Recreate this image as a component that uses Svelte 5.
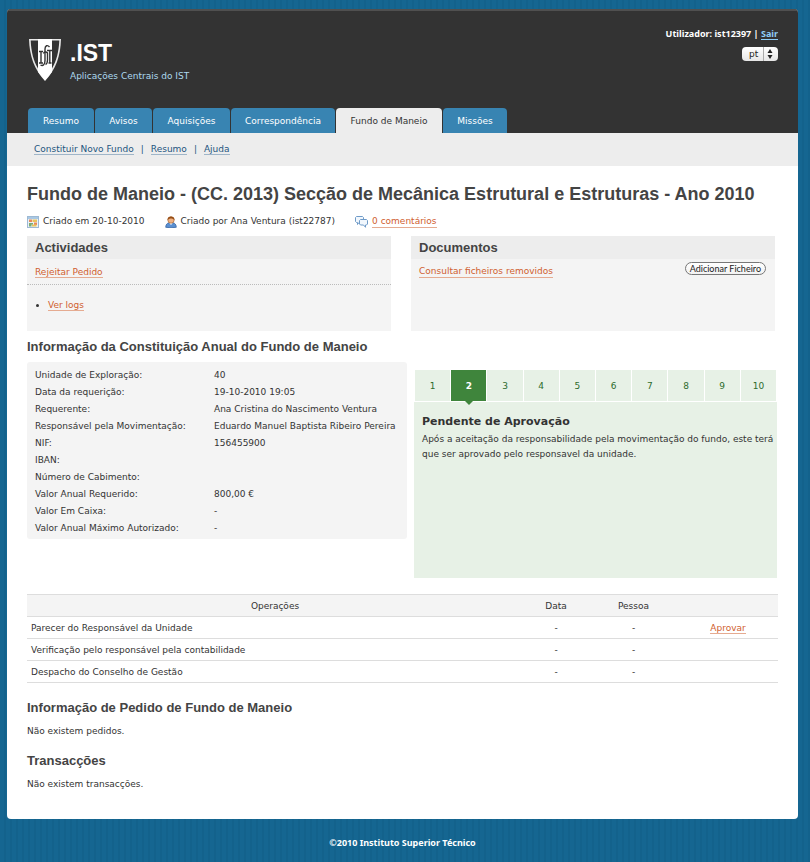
<script>
  const tabs = ['Resumo', 'Avisos', 'Aquisições', 'Correspondência', 'Fundo de Maneio', 'Missões'];
  const current = 'Fundo de Maneio';
  const details = [
    ['Unidade de Exploração:', '40'],
    ['Data da requerição:', '19-10-2010 19:05'],
    ['Requerente:', 'Ana Cristina do Nascimento Ventura'],
    ['Responsável pela Movimentação:', 'Eduardo Manuel Baptista Ribeiro Pereira'],
    ['NIF:', '156455900'],
    ['IBAN:', ''],
    ['Número de Cabimento:', ''],
    ['Valor Anual Requerido:', '800,00 €'],
    ['Valor Em Caixa:', '-'],
    ['Valor Anual Máximo Autorizado:', '-']
  ];
  const steps = [1, 2, 3, 4, 5, 6, 7, 8, 9, 10];
  const operations = [
    { name: 'Parecer do Responsável da Unidade', action: 'Aprovar' },
    { name: 'Verificação pelo responsável pela contabilidade', action: '' },
    { name: 'Despacho do Conselho de Gestão', action: '' }
  ];
  let step = $state(2);
</script>

<div class="card">
  <header>
    <div class="top">
      <div class="brand">
        <svg class="shield" width="32" height="42" viewBox="0 0 32 42" aria-hidden="true">
          <path d="M0 0H32C31.500 17 27 30 16 42C5 30 .5 17 0 0Z" fill="#e8e8e8" />
          <path d="M1.700 1.600H9V29.500C4.500 22 2.200 13 1.700 1.600ZM23 1.600H30.300C29.800 13 27.500 22 23 29.500Z" fill="#333" />
          <path d="M9 0H23V33L16 41.500L9 33Z" fill="#fff" />
          <g fill="none" stroke="#333" stroke-width="1.400">
            <path d="M10 12.500H14M12 12.500V24M10 24H14" />
            <path d="M20.500 8C18.500 5.500 16 6.500 16 10V21.500C16 25.500 14 27.500 11.500 26" />
            <path d="M14.500 14.500C15 12.500 17.500 12.500 18.500 14V21C18.500 23.500 17.500 25 16.500 25.500" />
            <path d="M18 11.500H23M20.800 11.500V24M19.500 24H22.500" />
          </g>
        </svg>
        <div>
          <div class="name">.IST</div>
          <div class="tagline">Aplicações Centrais do IST</div>
        </div>
      </div>
      <div class="user">
        <div>Utilizador: ist12397 | <a href="#sair">Sair</a></div>
        <div class="lang">
          <select aria-label="Idioma"><option>pt</option><option>en</option></select>
          <svg width="6" height="10" viewBox="0 0 6 10" aria-hidden="true"><path d="M3 0L5.500 4H.5ZM3 10L.5 6H5.500Z" fill="#222" /></svg>
        </div>
      </div>
    </div>
    <nav class="tabs">
      {#each tabs as tab}
        <a href="#tab" class:current={tab === current}>{tab}</a>
      {/each}
    </nav>
  </header>
  <nav class="sub">
    <a href="#novo">Constituir Novo Fundo</a><span>|</span><a href="#resumo">Resumo</a><span>|</span><a href="#ajuda">Ajuda</a>
  </nav>

  <main>
    <h1>Fundo de Maneio - (CC. 2013) Secção de Mecânica Estrutural e Estruturas - Ano 2010</h1>
    <div class="meta">
      <span>
        <svg width="12" height="12" viewBox="0 0 12 12" aria-hidden="true">
          <rect x=".5" y=".5" width="11" height="11" fill="#e9f1f8" stroke="#9db9d3" />
          <path d="M1 1H11V3H1Z" fill="#a9c8e4" />
          <path d="M2 3.500H5V6H2ZM7 6.500H10V9H7Z" fill="#e8895a" />
          <path d="M5.500 3.500H10V6H5.500ZM5 8.500H9.500V10.500H5Z" fill="#e9c35d" />
          <path d="M2 7H6V8.500H4.500V10.500H2Z" fill="#7dab72" />
        </svg>
        Criado em 20-10-2010
      </span>
      <span>
        <svg width="12" height="12" viewBox="0 0 12 12" aria-hidden="true">
          <path d="M.7 11.300C.7 8.500 2.300 7 4 6.800H8C9.700 7 11.300 8.500 11.300 11.300Q6 12.300 .7 11.300Z" fill="#5b8fd0" stroke="#2c5d9e" stroke-width=".7" />
          <path d="M4.300 6.900H7.700L6 9Z" fill="#fff" />
          <circle cx="6" cy="4" r="3.200" fill="#eeb184" stroke="#a35d25" stroke-width=".6" />
          <path d="M2.600 4.300C1.800-.8 10.200-.8 9.400 4.300Q8.400 2.300 6 2.600Q3.500 2.300 2.600 4.300Z" fill="#964d14" />
        </svg>
        Criado por Ana Ventura (ist22787)
      </span>
      <span>
        <svg width="13" height="12" viewBox="0 0 13 12" fill="#f1f7fd" stroke="#6f9bc8" aria-hidden="true">
          <path d="M1.500.5H7.500L8.500 1.500V5.500L7.500 6.500H4L2.500 8.500V6.500H1.500L.5 5.500V1.500Z" />
          <path d="M5.500 3.500H11.500L12.500 4.500V8L11.500 9H10.500V11.300L8.500 9H5.500L4.500 8V4.500Z" />
        </svg>
        <a href="#comentarios">0 comentários</a>
      </span>
    </div>

    <div class="boxes">
      <section class="box">
        <h2>Actividades</h2>
        <p class="request"><a href="#rejeitar">Rejeitar Pedido</a></p>
        <ul><li><a href="#logs">Ver logs</a></li></ul>
      </section>
      <section class="box">
        <h2>Documentos</h2>
        <div class="files">
          <a href="#removidos">Consultar ficheiros removidos</a>
          <button type="button">Adicionar Ficheiro</button>
        </div>
      </section>
    </div>

    <h2>Informação da Constituição Anual do Fundo de Maneio</h2>
    <div class="info">
      <table class="details">
        <tbody>
          {#each details as [label, value]}
            <tr><th scope="row">{label}</th><td>{value}</td></tr>
          {/each}
        </tbody>
      </table>
      <div class="workflow">
        <div class="steps">
          {#each steps as n}
            <button type="button" class:active={n === step} onclick={() => (step = n)}>{n}</button>
          {/each}
        </div>
        <div class="panel">
          <h3>Pendente de Aprovação</h3>
          <p>Após a aceitação da responsabilidade pela movimentação do fundo, este terá que ser aprovado pelo responsavel da unidade.</p>
        </div>
      </div>
    </div>

    <table class="ops">
      <thead>
        <tr><th class="op">Operações</th><th class="date">Data</th><th class="who">Pessoa</th><th class="act"></th></tr>
      </thead>
      <tbody>
        {#each operations as o}
          <tr>
            <td class="op">{o.name}</td><td>-</td><td>-</td>
            <td>{#if o.action}<a href="#aprovar">{o.action}</a>{/if}</td>
          </tr>
        {/each}
      </tbody>
    </table>

    <h2>Informação de Pedido de Fundo de Maneio</h2>
    <p class="empty">Não existem pedidos.</p>
    <h2>Transacções</h2>
    <p class="empty">Não existem transacções.</p>
  </main>
</div>
<footer>©2010 Instituto Superior Técnico</footer>

<style>
  :global(body) {
    background: repeating-linear-gradient(90deg, #156691 0 4px, #13628c 4px 6px);
    font: 9px/17px Verdana, 'DejaVu Sans', sans-serif;
    color: #333;
  }
  h1, h2, h3, p, ul { margin: 0; }
  h1, h2 { font-family: 'Liberation Sans', Arial, sans-serif; color: #444; }
  a { color: #d0602f; text-decoration: none; border-bottom: 1px solid #e5ab91; }
  .card { margin: 9px 12px 0 7px; background: #fff; border-radius: 4px; overflow: hidden; }
  header { background: #333; border-top: 2px solid #505050; padding: 0 20px; color: #fff; }
  .top { display: flex; justify-content: space-between; height: 97px; }
  .brand { display: flex; gap: 9px; padding: 28px 0 0 2px; }
  .name { font: bold 23px/28px 'Liberation Sans', Arial, sans-serif; }
  .tagline { color: #add9ee; line-height: 18px; }
  .user { display: flex; flex-direction: column; align-items: flex-end; gap: 5px; padding-top: 14px; font-family: 'Noto Sans', sans-serif; font-weight: bold; }
  .user a { display: inline-block; line-height: 11px; color: #8fcdf5; border-color: #8fcdf5; }
  .lang { position: relative; display: flex; }
  .lang svg { position: absolute; right: 5px; top: 2px; pointer-events: none; }
  select {
    appearance: none; width: 36px; height: 14px; padding: 0 0 0 7px; border: 0; border-radius: 4px;
    background: linear-gradient(90deg, transparent 21px, #aaa 21px 22px, transparent 22px), linear-gradient(#fff, #e6e6e6);
    font: 9px/14px Verdana, 'DejaVu Sans', sans-serif; color: #222;
  }
  .tabs { display: grid; grid-template-columns: 66px 57px 77px 104px 106px 64px; gap: 1px; padding-left: 1px; }
  .tabs a {
    height: 25px; line-height: 26px; border: 0; border-radius: 4px 4px 0 0; text-align: center; white-space: nowrap;
    background: #3884b2; color: #fff;
  }
  .tabs a.current { background: #ededed; color: #333; }
  .sub { background: #ededed; padding: 8px 27px; height: 17px; color: #245580; }
  .sub a { color: #245580; border-color: #9fb5c8; }
  .sub span { padding: 0 7px; }
  main { padding: 17px 20px 17px; }
  h1 { font-size: 18px; line-height: 22px; }
  .meta { display: flex; gap: 20px; margin-top: 8px; }
  .meta span { display: flex; align-items: center; gap: 4px; }
  .meta a { line-height: 11px; }
  .boxes { display: flex; gap: 20px; margin: 6px 3px 4px 0; }
  .box { flex: 1; height: 95px; background: #f4f4f4; }
  .box h2 { padding: 0 8px; background: #ededed; }
  h2 { font-size: 13px; line-height: 23px; }
  .request { padding: 5px 8px 4px; height: 16px; border-bottom: 1px dotted #bbb; }
  ul { padding: 12px 0 0 21px; }
  .files { display: flex; justify-content: space-between; align-items: flex-start; padding: 3px 9px 0 8px; }
  .files a { line-height: 11px; margin-top: 4px; }
  .files button {
    height: 13px; padding: 0 4px; border: 1px solid #777; border-radius: 7px;
    background: linear-gradient(#fff, #f2f2f2); font: 9px/11px Lato, sans-serif; color: #222;
  }
  .info { display: flex; align-items: flex-start; gap: 7px; margin: 4px 1px 0 0; }
  .details { width: 380px; border-collapse: separate; border-spacing: 0; background: #f4f4f4; border-radius: 3px; padding: 5px 0 2px 8px; }
  .details th { width: 179px; height: 17px; padding: 0; text-align: left; font-weight: normal; }
  .details td { padding: 0; white-space: nowrap; }
  .workflow { flex: 1; padding-top: 8px; }
  .steps { display: flex; gap: 1px; padding: 0 1px; }
  .steps button {
    position: relative; flex: 1; height: 31px; padding: 1px 0 0; border: 0; background: #e7f1e6; color: #2d6b2d;
    font: 9px/30px Verdana, 'DejaVu Sans', sans-serif;
  }
  .steps .active { background: #3f853c; color: #fff; font-weight: bold; }
  .steps .active::after {
    content: ''; position: absolute; left: 50%; top: 100%; margin-left: -4px;
    border: 4px solid transparent; border-top-color: #3f853c; border-bottom: 0;
  }
  .panel { margin-top: 1px; height: 166px; padding: 10px 0 0 8px; background: #e7f1e6; }
  .panel h3 { font-size: 11px; line-height: 20px; color: #333; }
  .panel p { line-height: 15px; }
  .ops { width: 100%; table-layout: fixed; border-collapse: collapse; margin: 16px 0 13px; text-align: center; }
  .ops th, .ops td { height: 19px; padding: 2px 0 0; border-bottom: 1px solid #ddd; line-height: 15px; }
  .ops th { font-weight: normal; background: #f4f4f4; border-top: 1px solid #ddd; }
  .ops td.op { text-align: left; padding-left: 4px; }
  .date { width: 66px; }
  .who { width: 89px; }
  .act { width: 100px; }
  .empty { padding: 4px 0 9px; }
  footer { padding: 15px 0 11px; text-align: center; color: #fff; font-family: 'Noto Sans', sans-serif; font-weight: bold; margin-right: 5px; }
</style>
